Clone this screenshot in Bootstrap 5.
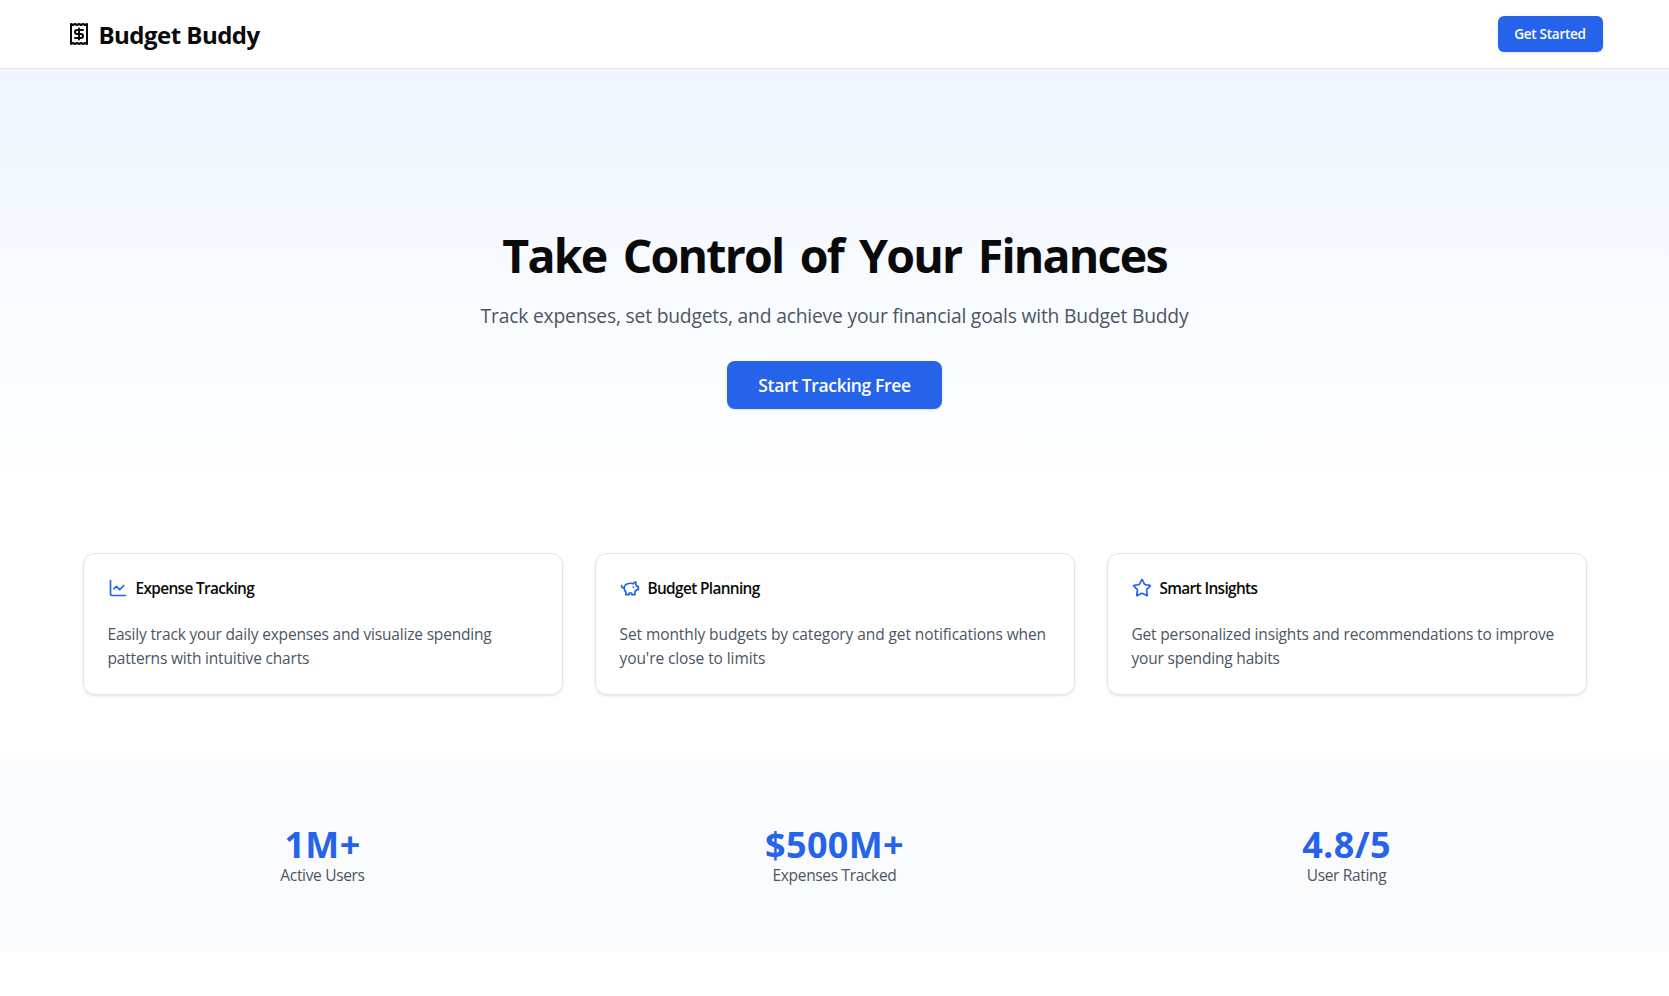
<!DOCTYPE html>
<html lang="en">
<head>
<meta charset="utf-8">
<meta name="viewport" content="width=device-width, initial-scale=1">
<title>Budget Buddy</title>
<link href="https://cdn.jsdelivr.net/npm/bootstrap@5.3.0/dist/css/bootstrap.min.css" rel="stylesheet">
<style>
body{font-family:"Open Sans","Noto Sans",sans-serif;color:#0a0a0a;background:#fff;line-height:24px}
.wrap{width:100%;max-width:1536px;margin:0 auto}
svg{fill:none;stroke:currentColor;stroke-width:2;stroke-linecap:round;stroke-linejoin:round;flex:none}
.site-head{border-bottom:1px solid #dfe4ea;height:69px}
.brand{font-size:24px;font-weight:700;line-height:32px;letter-spacing:-.52px}
.brand span{padding-top:2px}
.blue{color:#2563eb}
.cta,.cta:hover{background:#2563eb;color:#fff;border:0;border-radius:6px;font-weight:600;box-shadow:0 1px 3px #0000001f;padding:0}
.cta-sm{width:105px;height:36px;font-size:13.6px;letter-spacing:-.3px}
.cta-lg{width:215px;height:48px;font-size:17.5px;letter-spacing:-.37px;border-radius:8px}
.hero{height:420px;padding-top:162px;background:linear-gradient(#eff6ff,#fff)}
.hero h1{font-size:46.5px;line-height:48px;font-weight:700;letter-spacing:-1.8px;word-spacing:6px;margin:0 0 23px}
.hero p{font-size:19.3px;line-height:28px;letter-spacing:-.2px;margin-bottom:31px}
.muted{color:#4b5563}
.features{padding:64px 16px}
.tri{--bs-gutter-x:32px}
.feature{border:1px solid #e5e5e5;border-radius:12px;box-shadow:0 1px 3px #0000001a,0 1px 2px -1px #0000001a;padding:22px 24px;height:142px}
.feature h2{font-size:15.4px;line-height:24px;font-weight:600;letter-spacing:-.65px;margin:0}
.feature h2 span{padding-top:2px;line-height:22px}
.feature p{font-size:15.5px;letter-spacing:-.18px;margin:22px 0 0}
.feature .looser{letter-spacing:-.09px}
.stats{background:#fafbfd;height:192px;padding-top:66px}
.figure-num{font-size:36px;line-height:40px;font-weight:700;letter-spacing:.35px}
.stat-label{font-size:15.5px;line-height:20px;letter-spacing:-.33px}
</style>
</head>
<body>
<header class="site-head d-flex align-items-start pt-3">
  <div class="wrap d-flex align-items-center justify-content-between">
    <div class="brand d-flex align-items-center gap-2">
      <svg width="24" height="24" viewBox="0 0 24 24"><path d="M4 2v20l2-1 2 1 2-1 2 1 2-1 2 1 2-1 2 1V2l-2 1-2-1-2 1-2-1-2 1-2-1-2 1Z"/><path d="M16 8h-6a2 2 0 1 0 0 4h4a2 2 0 1 1 0 4H8"/><path d="M12 17.5v-11"/></svg>
      <span>Budget Buddy</span>
    </div>
    <button class="btn cta cta-sm">Get Started</button>
  </div>
</header>
<main>
  <section class="hero text-center">
    <h1>Take Control of Your Finances</h1>
    <p class="muted">Track expenses, set budgets, and achieve your financial goals with Budget Buddy</p>
    <button class="btn cta cta-lg">Start Tracking Free</button>
  </section>
  <section class="wrap features">
    <div class="row tri">
      <div class="col-4"><div class="feature">
        <h2 class="d-flex align-items-center gap-2"><svg class="blue" width="20" height="20" viewBox="0 0 24 24"><path d="M3 3v16a2 2 0 0 0 2 2h16"/><path d="m19 9-5 5-4-4-3 3"/></svg><span>Expense Tracking</span></h2>
        <p class="muted">Easily track your daily expenses and visualize spending<br>patterns with intuitive charts</p>
      </div></div>
      <div class="col-4"><div class="feature">
        <h2 class="d-flex align-items-center gap-2"><svg class="blue" width="20" height="20" viewBox="0 0 24 24"><path d="M19 5c-1.5 0-2.8 1.4-3 2-3.5-1.5-11-.3-11 5 0 1.8 0 3 2 4.5V20h4v-2h3v2h4v-4c1-.5 1.7-1 2-2h2v-4h-2c0-1-.5-1.5-1-2V5z"/><path d="M2 9v1c0 1.1.9 2 2 2h1"/><path d="M16 11h.01"/></svg><span>Budget Planning</span></h2>
        <p class="muted looser">Set monthly budgets by category and get notifications when<br>you're close to limits</p>
      </div></div>
      <div class="col-4"><div class="feature">
        <h2 class="d-flex align-items-center gap-2"><svg class="blue" width="20" height="20" viewBox="0 0 24 24"><path d="M11.525 2.295a.53.53 0 0 1 .95 0l2.31 4.679a2.12 2.12 0 0 0 1.595 1.16l5.166.756a.53.53 0 0 1 .294.904l-3.736 3.638a2.12 2.12 0 0 0-.611 1.878l.882 5.14a.53.53 0 0 1-.771.56l-4.618-2.428a2.12 2.12 0 0 0-1.973 0L6.396 21.01a.53.53 0 0 1-.77-.56l.881-5.139a2.12 2.12 0 0 0-.611-1.879L2.16 9.795a.53.53 0 0 1 .294-.906l5.165-.755a2.12 2.12 0 0 0 1.597-1.16z"/></svg><span>Smart Insights</span></h2>
        <p class="muted">Get personalized insights and recommendations to improve<br>your spending habits</p>
      </div></div>
    </div>
  </section>
  <section class="stats">
    <div class="wrap px-3">
      <div class="row tri text-center">
        <div class="col-4"><div class="figure-num blue">1M+</div><div class="stat-label muted">Active Users</div></div>
        <div class="col-4"><div class="figure-num blue">$500M+</div><div class="stat-label muted">Expenses Tracked</div></div>
        <div class="col-4"><div class="figure-num blue">4.8/5</div><div class="stat-label muted">User Rating</div></div>
      </div>
    </div>
  </section>
</main>
<script src="https://cdn.jsdelivr.net/npm/bootstrap@5.3.0/dist/js/bootstrap.bundle.min.js"></script>
</body>
</html>
